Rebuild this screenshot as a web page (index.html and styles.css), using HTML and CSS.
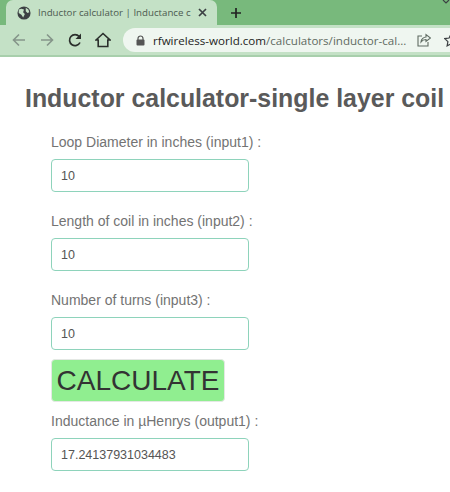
FILE: index.html
```html
<!DOCTYPE html>
<html lang="en">
<head>
    <meta charset="UTF-8">
    <title>Inductor calculator</title>
    <link rel="stylesheet" href="styles.css">
</head>
<body>
    <div class="tab-strip">
        <div class="tab">
            <svg class="globe" width="14" height="14" viewBox="0 0 16 16">
                <circle cx="8" cy="8" r="7.5" fill="#3c4043"/>
                <path d="M2 4l3-1 3 1-1 3 2 2-2 4-2-3-3-2zM10 2l3 2 1 3-2 1-2-2z" fill="#c4e1c6"/>
            </svg>
            <span class="tab-title">Inductor calculator | Inductance c</span>
            <svg class="tab-close" width="9" height="9" viewBox="0 0 9 9">
                <path d="M1 1l7 7M8 1l-7 7" stroke="#3c4043" stroke-width="1.7"/>
            </svg>
        </div>
        <svg class="new-tab" width="12" height="12" viewBox="0 0 12 12">
            <path d="M6 1v10M1 6h10" stroke="#222" stroke-width="1.7"/>
        </svg>
        <svg class="window-chevron" width="8" height="5" viewBox="0 0 8 5">
            <path d="M1 0l3 3 3-3" fill="none" stroke="#3c4043" stroke-width="1.2"/>
        </svg>
    </div>
    <div class="toolbar">
        <svg class="nav-icon" width="16" height="16" viewBox="0 0 16 16">
            <path d="M14 8H2.500M8 2.500L2.500 8 8 13.500" fill="none" stroke="#85958a" stroke-width="1.600"/>
        </svg>
        <svg class="nav-icon" width="16" height="16" viewBox="0 0 16 16">
            <path d="M2 8h11.500M8 2.500L13.500 8 8 13.500" fill="none" stroke="#85958a" stroke-width="1.600"/>
        </svg>
        <svg class="nav-icon" width="16" height="16" viewBox="0 0 16 16">
            <path d="M13 10.500A5.500 5.500 0 1 1 12.200 4.500" fill="none" stroke="#2b2f2c" stroke-width="1.700"/>
            <path d="M14 1.500V7H8.500z" fill="#2b2f2c"/>
        </svg>
        <svg class="nav-icon" width="16" height="16" viewBox="0 0 16 16">
            <path d="M1 8l7-6.500L15 8h-2.200v6.500H3.200V8z" fill="none" stroke="#2b2f2c" stroke-width="1.600"/>
        </svg>
        <div class="address-bar">
            <svg class="lock" width="9" height="11" viewBox="0 0 9 11">
                <path d="M2 5V3.500a2.500 2.500 0 0 1 5 0V5" fill="none" stroke="#555" stroke-width="1.200"/>
                <rect x="0.500" y="4.500" width="8" height="6" rx="1" fill="#555"/>
            </svg>
            <span class="url"><span class="domain">rfwireless-world.com</span>/calculators/inductor-cal...</span>
            <svg class="share" width="14" height="14" viewBox="0 0 14 14">
                <path d="M5 3H1v10h10V9M4 9c0-3 3-5 5-5V1.500L13.500 5 9 8.500V6.500C7 6.500 5 7.500 4 9z" fill="none" stroke="#5f6b62" stroke-width="1.100"/>
            </svg>
            <svg class="star" width="14" height="14" viewBox="0 0 14 14">
                <path d="M7 1l1.900 4 4.300.6-3.100 3 .8 4.300L7 10.800 3.100 12.900l.8-4.300-3.100-3 4.300-.6z" fill="none" stroke="#3c4043" stroke-width="1.200"/>
            </svg>
        </div>
    </div>
    <main class="page">
        <h1 class="title">Inductor calculator-single layer coil</h1>
        <form class="calc-form">
            <label class="field">
                <span class="field-label">Loop Diameter in inches (input1) :</span>
                <input class="field-input" type="text" value="10">
            </label>
            <label class="field">
                <span class="field-label">Length of coil in inches (input2) :</span>
                <input class="field-input" type="text" value="10">
            </label>
            <label class="field field-last">
                <span class="field-label">Number of turns (input3) :</span>
                <input class="field-input" type="text" value="10">
            </label>
            <button class="calc-button" type="button">CALCULATE</button>
            <label class="field">
                <span class="field-label">Inductance in µHenrys (output1) :</span>
                <input class="field-input" type="text" value="17.24137931034483">
            </label>
        </form>
    </main>
</body>
</html>
```
FILE: styles.css
```css
body {
    margin: 0;
    height: 492px;
    overflow: hidden;
    background-color: #fff;
    font-family: "Liberation Sans", Arial, sans-serif;
}
.tab-strip {
    height: 25px;
    background-color: #78b97c;
    display: flex;
    align-items: center;
    position: relative;
}
.tab {
    width: 211px;
    height: 25px;
    box-sizing: border-box;
    margin-left: 6px;
    padding: 0 10px 0 11px;
    background-color: #c4e1c6;
    border-radius: 7px 7px 0 0;
    display: flex;
    align-items: center;
}
.tab-title {
    flex: 1;
    margin-left: 7px;
    font-family: "Open Sans", sans-serif;
    font-size: 9.7px;
    color: #4c5a50;
    white-space: nowrap;
    overflow: hidden;
}
.new-tab {
    margin-left: 13px;
}
.window-chevron {
    position: absolute;
    top: 0;
    right: 0;
}
.toolbar {
    height: 32px;
    box-sizing: border-box;
    background-color: #c4e1c6;
    border-bottom: 2px solid #a8cfac;
    padding-left: 11px;
    display: flex;
    align-items: center;
    gap: 12px;
}
.address-bar {
    flex: 1;
    min-width: 0;
    height: 24px;
    padding-left: 13px;
    background-color: #eff6f0;
    border-radius: 12px 0 0 12px;
    display: flex;
    align-items: center;
    overflow: hidden;
}
.lock {
    flex-shrink: 0;
}
.url {
    flex-shrink: 0;
    margin-left: 8px;
    font-family: "Open Sans", sans-serif;
    font-size: 11.6px;
    color: #5f6b62;
    white-space: nowrap;
}
.domain {
    color: #222;
}
.share {
    margin-left: 11px;
    flex-shrink: 0;
}
.star {
    margin-left: 13px;
    flex-shrink: 0;
}
.page {
    padding-left: 25px;
}
.title {
    margin: 26px 0 0;
    font-size: 24.9px;
    line-height: 31px;
    font-weight: bold;
    color: #5a5a5a;
    white-space: nowrap;
}
.calc-form {
    margin: 20px 0 0 26px;
}
.field {
    display: block;
    margin-bottom: 21px;
}
.field-last {
    margin-bottom: 9px;
}
.field-label {
    display: block;
    font-size: 14px;
    line-height: 16px;
    color: #737373;
    margin-bottom: 9px;
}
.field-input {
    display: block;
    width: 198px;
    height: 33px;
    box-sizing: border-box;
    padding: 0 9px;
    border: 1px solid #8ed3bb;
    border-radius: 4px;
    font-family: "Liberation Sans", Arial, sans-serif;
    font-size: 12.5px;
    color: #555;
}
.calc-button {
    display: block;
    width: 174px;
    height: 43px;
    margin-bottom: 11px;
    padding: 0;
    background-color: #90ee90;
    border: 1px solid #e4e8e4;
    border-radius: 4px;
    font-family: "Liberation Sans", Arial, sans-serif;
    font-size: 28px;
    color: #333;
}
```
